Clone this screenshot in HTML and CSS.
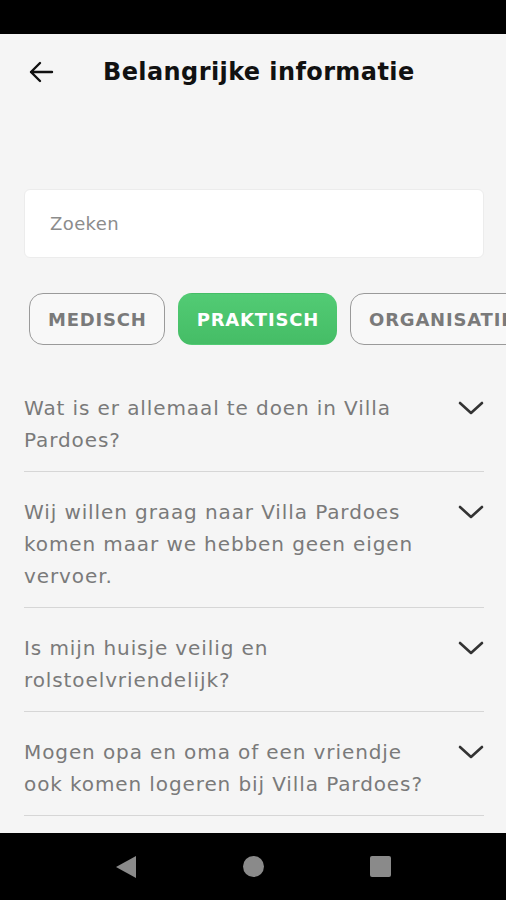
FILE: index.html
```html
<!DOCTYPE html>
<html lang="nl">
<head>
    <meta charset="UTF-8">
    <meta name="viewport" content="width=device-width, initial-scale=1.0">
    <title>Belangrijke informatie</title>
    <link rel="stylesheet" href="styles.css">
</head>
<body>

    <!-- Status bar -->
    <div class="status-bar"></div>

    <div class="screen">
        <!-- Header -->
        <div class="header">
            <button class="back-btn" aria-label="Terug">
                <svg width="26" height="22" viewBox="0 0 26 22">
                    <path d="M24 11H3M12 2L3 11l9 9" fill="none" stroke="#111" stroke-width="2.4" stroke-linecap="round" stroke-linejoin="round"/>
                </svg>
            </button>
            <h1 class="title">Belangrijke informatie</h1>
        </div>

        <!-- Search -->
        <div class="search">
            <input type="text" placeholder="Zoeken">
        </div>

        <!-- Categories -->
        <div class="chips">
            <span class="chip">MEDISCH</span>
            <span class="chip active">PRAKTISCH</span>
            <span class="chip">ORGANISATIE</span>
        </div>

        <!-- Questions -->
        <div class="faq">
            <div class="faq-item">
                <p>Wat is er allemaal te doen in Villa Pardoes?</p>
                <svg class="chevron" width="26" height="16" viewBox="0 0 26 16"><path d="M2 3l11 10L24 3" fill="none" stroke="#333" stroke-width="2.6" stroke-linecap="round" stroke-linejoin="round"/></svg>
            </div>
            <div class="faq-item">
                <p>Wij willen graag naar Villa Pardoes komen maar we hebben geen eigen vervoer.</p>
                <svg class="chevron" width="26" height="16" viewBox="0 0 26 16"><path d="M2 3l11 10L24 3" fill="none" stroke="#333" stroke-width="2.6" stroke-linecap="round" stroke-linejoin="round"/></svg>
            </div>
            <div class="faq-item">
                <p>Is mijn huisje veilig en rolstoelvriendelijk?</p>
                <svg class="chevron" width="26" height="16" viewBox="0 0 26 16"><path d="M2 3l11 10L24 3" fill="none" stroke="#333" stroke-width="2.6" stroke-linecap="round" stroke-linejoin="round"/></svg>
            </div>
            <div class="faq-item">
                <p>Mogen opa en oma of een vriendje ook komen logeren bij Villa Pardoes?</p>
                <svg class="chevron" width="26" height="16" viewBox="0 0 26 16"><path d="M2 3l11 10L24 3" fill="none" stroke="#333" stroke-width="2.6" stroke-linecap="round" stroke-linejoin="round"/></svg>
            </div>
        </div>
    </div>

    <!-- Navigation bar -->
    <div class="nav-bar">
        <svg width="22" height="24" viewBox="0 0 22 24"><path d="M21 1v22L1 12z" fill="#8a8a8a"/></svg>
        <span class="nav-home"></span>
        <span class="nav-recent"></span>
    </div>

</body>
</html>
```

FILE: styles.css
```css
/* General Reset */
* {
    margin: 0;
    padding: 0;
    box-sizing: border-box;
}

body {
    font-family: "DejaVu Sans", Arial, sans-serif;
    background-color: #000;
    width: 506px;
    height: 900px;
    overflow: hidden;
    display: flex;
    flex-direction: column;
}

.status-bar {
    height: 34px;
    background-color: #000;
    flex-shrink: 0;
}

/* Main screen */
.screen {
    flex: 1;
    background-color: #f5f5f5;
    overflow: hidden;
    padding: 0 22px 0 24px;
}

/* Header */
.header {
    display: flex;
    align-items: center;
    height: 76px;
}

.back-btn {
    background: none;
    border: none;
    width: 30px;
    height: 30px;
    display: flex;
    align-items: center;
    justify-content: center;
    margin-left: 2px;
}

.title {
    font-size: 24px;
    font-weight: 700;
    color: #111;
    margin-left: 47px;
    letter-spacing: 0.4px;
}

/* Search */
.search {
    margin-top: 79px;
    background-color: #fff;
    border: 1px solid #ececec;
    border-radius: 6px;
    height: 69px;
    display: flex;
    align-items: center;
    padding: 0 25px;
}

.search input {
    border: none;
    outline: none;
    background: transparent;
    font-family: inherit;
    font-size: 18px;
    letter-spacing: 0.4px;
    color: #333;
    width: 100%;
}

.search input::placeholder {
    color: #8c8c8c;
}

/* Chips */
.chips {
    display: flex;
    gap: 13px;
    margin-top: 35px;
    margin-left: 5px;
    margin-right: -22px;
    overflow: hidden;
}

.chip {
    flex-shrink: 0;
    height: 52px;
    padding: 0 17px 0 18px;
    display: flex;
    align-items: center;
    border: 1.5px solid #9a9a9a;
    border-radius: 14px;
    font-size: 18px;
    font-weight: 700;
    letter-spacing: 0.8px;
    color: #7a7a7a;
    background-color: #f8f8f8;
}

.chip.active {
    border-color: transparent;
    color: #fff;
    background: linear-gradient(180deg, #52cb74, #45bd66);
}

/* FAQ list */
.faq {
    margin-top: 23px;
}

.faq-item {
    display: flex;
    align-items: flex-start;
    justify-content: space-between;
    gap: 14px;
    padding: 24px 0 15px;
    border-bottom: 1px solid #d6d6d6;
}

.faq-item p {
    font-size: 20px;
    line-height: 32px;
    letter-spacing: 0.9px;
    color: #7a7a7a;
    max-width: 420px;
}

.chevron {
    flex-shrink: 0;
    margin-top: 8px;
}

/* Bottom navigation bar */
.nav-bar {
    height: 67px;
    flex-shrink: 0;
    background-color: #000;
    display: flex;
    align-items: center;
    justify-content: center;
    gap: 106px;
}

.nav-home {
    width: 21px;
    height: 21px;
    border-radius: 50%;
    background-color: #8a8a8a;
}

.nav-recent {
    width: 21px;
    height: 21px;
    border-radius: 2px;
    background-color: #8a8a8a;
}
```
